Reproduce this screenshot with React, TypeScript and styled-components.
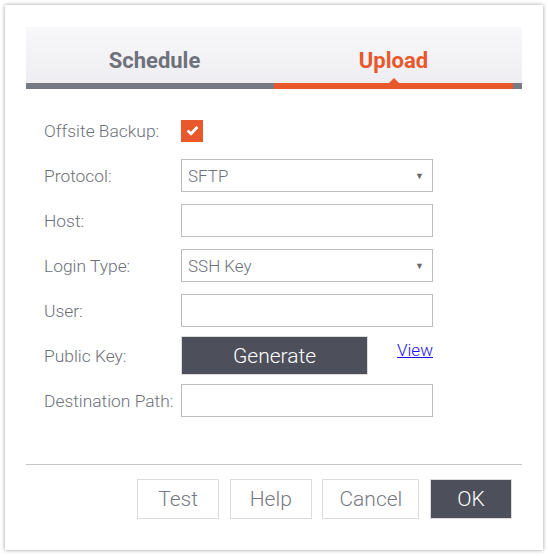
import React from 'react';
import styled, { createGlobalStyle } from 'styled-components';

const GlobalStyle = createGlobalStyle`
  body {
    margin: 0;
    background: #ffffff;
    font-family: Roboto, "Liberation Sans", sans-serif;
  }
`;

interface FieldRow {
  label: string;
  kind: 'check' | 'select' | 'input' | 'key';
  value?: string;
}

const rows: FieldRow[] = [
  { label: 'Offsite Backup:', kind: 'check' },
  { label: 'Protocol:', kind: 'select', value: 'SFTP' },
  { label: 'Host:', kind: 'input' },
  { label: 'Login Type:', kind: 'select', value: 'SSH Key' },
  { label: 'User:', kind: 'input' },
  { label: 'Public Key:', kind: 'key' },
  { label: 'Destination Path:', kind: 'input' },
];

const App = () => {
  const renderControl = (row: FieldRow) => {
    switch (row.kind) {
      case 'check':
        return (
          <CheckBox>
            <svg width="13" height="11" viewBox="0 0 13 11">
              <path d="M1.6 5.6 L5 8.8 L11.4 2" fill="none" stroke="#fff" strokeWidth="2.8" />
            </svg>
          </CheckBox>
        );
      case 'select':
        return (
          <Select>
            <span>{row.value}</span>
            <Arrow>▼</Arrow>
          </Select>
        );
      case 'key':
        return (
          <KeyWrap>
            <GenerateButton>Generate</GenerateButton>
            <ViewLink href="#">View</ViewLink>
          </KeyWrap>
        );
      default:
        return <TextInput />;
    }
  };

  return (
    <>
      <GlobalStyle />
      <Card>
        <TabBar>
          <Tab>Schedule</Tab>
          <Tab active>Upload</Tab>
        </TabBar>
        <Form>
          {rows.map((row) => (
            <Row key={row.label} tall={row.kind === 'key'}>
              <Label>{row.label}</Label>
              {renderControl(row)}
            </Row>
          ))}
        </Form>
        <Footer>
          <FooterButton>Test</FooterButton>
          <FooterButton>Help</FooterButton>
          <FooterButton>Cancel</FooterButton>
          <FooterButton primary>OK</FooterButton>
        </Footer>
      </Card>
    </>
  );
};

const Card = styled.div`
  margin: 5px;
  width: 538px;
  height: 545px;
  box-sizing: border-box;
  padding: 22px 21px 0;
  background: #fff;
  box-shadow: 0 0 4px rgba(0, 0, 0, 0.4);
  display: flex;
  flex-direction: column;
`;

const TabBar = styled.div`
  display: flex;
  padding: 0 9px;
  height: 56px;
  background: linear-gradient(#f8f8fa, #eeeef2);
  border-bottom: 6px solid #777a85;
  box-sizing: content-box;
`;

const Tab = styled.div<{ active?: boolean }>`
  position: relative;
  width: 239px;
  display: flex;
  align-items: center;
  justify-content: center;
  padding-top: 10px;
  box-sizing: border-box;
  font-size: 22px;
  font-weight: 700;
  color: ${(p) => (p.active ? '#e8582a' : '#6e717c')};
  ${(p) =>
    p.active &&
    `
    &::after {
      content: '';
      position: absolute;
      left: 0;
      right: 0;
      bottom: -6px;
      height: 6px;
      background: #e8582a;
    }
    &::before {
      content: '';
      position: absolute;
      left: 50%;
      bottom: 0;
      margin-left: -5px;
      border-left: 5px solid transparent;
      border-right: 5px solid transparent;
      border-bottom: 5px solid #e8582a;
    }
  `}
`;

const Form = styled.div`
  display: flex;
  flex-direction: column;
  gap: 12px;
  padding: 25px 0 0 18px;
  height: 375px;
  box-sizing: border-box;
`;

const Row = styled.div<{ tall?: boolean }>`
  display: flex;
  align-items: center;
  height: ${(p) => (p.tall ? '39px' : '33px')};
  margin: ${(p) => (p.tall ? '-3px 0' : '0')};
`;

const Label = styled.div`
  width: 137px;
  flex-shrink: 0;
  font-size: 17.4px;
  font-weight: 300;
  color: #6d707a;
`;

const CheckBox = styled.div`
  width: 22px;
  height: 22px;
  background: #e8582a;
  display: flex;
  align-items: center;
  justify-content: center;
`;

const Select = styled.div`
  width: 252px;
  height: 33px;
  box-sizing: border-box;
  border: 1px solid #bdbdbd;
  display: flex;
  align-items: center;
  justify-content: space-between;
  padding: 0 8px 0 6px;
  font-size: 17px;
  font-weight: 300;
  color: #6d707a;
`;

const Arrow = styled.span`
  font-size: 9px;
  color: #6a6a6a;
`;

const TextInput = styled.div`
  width: 252px;
  height: 33px;
  box-sizing: border-box;
  border: 1px solid #bdbdbd;
`;

const KeyWrap = styled.div`
  display: flex;
  align-items: flex-start;
  width: 252px;
  height: 39px;
  justify-content: space-between;
`;

const GenerateButton = styled.div`
  width: 187px;
  height: 39px;
  box-sizing: border-box;
  border: 1px solid #dcdcdc;
  background: #4d505b;
  color: #fff;
  font-size: 21px;
  font-weight: 300;
  display: flex;
  align-items: center;
  justify-content: center;
`;

const ViewLink = styled.a`
  margin-top: 4px;
  font-size: 17px;
  font-weight: 300;
  color: #1a0dee;
  text-decoration: underline;
`;

const Footer = styled.div`
  border-top: 1px solid #c4c4c4;
  display: flex;
  justify-content: flex-end;
  gap: 10.7px;
  padding: 14px 10px 0 0;
`;

const FooterButton = styled.div<{ primary?: boolean }>`
  min-width: 82px;
  height: 40px;
  padding: 0 16px;
  box-sizing: border-box;
  border: 1px solid #dcdcdc;
  background: ${(p) => (p.primary ? '#4d505b' : '#fff')};
  color: ${(p) => (p.primary ? '#fff' : '#777a82')};
  font-size: 21px;
  font-weight: 300;
  display: flex;
  align-items: center;
  justify-content: center;
`;

export default App;
